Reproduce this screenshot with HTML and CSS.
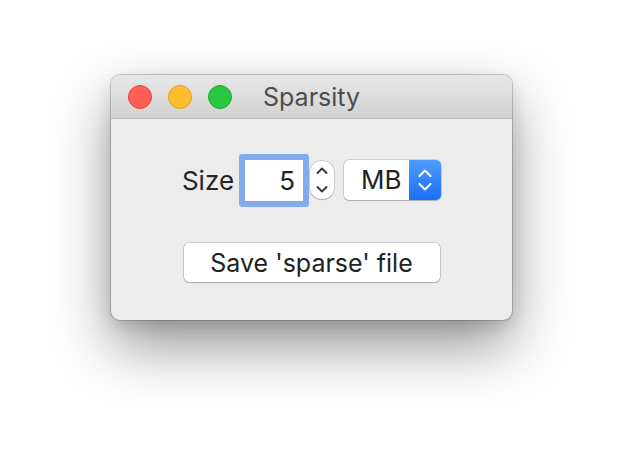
FILE: index.html
```html
<!DOCTYPE html>
<html>
<head>
<meta charset="utf-8">
<link rel="stylesheet" href="styles.css">
</head>
<body>
<div class="desk">
  <div class="window">
    <div class="titlebar">
      <div class="lights">
        <span class="light red"></span>
        <span class="light yellow"></span>
        <span class="light green"></span>
      </div>
      <div class="title">Sparsity</div>
    </div>
    <div class="content">
      <div class="row">
        <span class="label">Size</span>
        <div class="field">5</div>
        <div class="stepper">
          <svg width="24" height="38" viewBox="0 0 24 38">
            <path d="M7.5 12 L12 7.5 L16.5 12" fill="none" stroke="#333" stroke-width="1.8" stroke-linecap="round" stroke-linejoin="round"/>
            <path d="M7.5 26 L12 30.5 L16.5 26" fill="none" stroke="#333" stroke-width="1.8" stroke-linecap="round" stroke-linejoin="round"/>
          </svg>
        </div>
        <div class="popup">
          <span class="popup-text">MB</span>
          <span class="popup-arrows">
            <svg width="32" height="40" viewBox="0 0 32 40">
              <path d="M10.5 16 L16 10.5 L21.5 16" fill="none" stroke="#fff" stroke-width="2" stroke-linecap="round" stroke-linejoin="round"/>
              <path d="M10.5 24 L16 29.5 L21.5 24" fill="none" stroke="#fff" stroke-width="2" stroke-linecap="round" stroke-linejoin="round"/>
            </svg>
          </span>
        </div>
      </div>
      <button class="btn">Save 'sparse' file</button>
    </div>
  </div>
</div>
</body>
</html>
```
FILE: styles.css
```css
html, body {
  margin: 0;
  padding: 0;
  background: #ffffff;
}
body {
  width: 624px;
  height: 468px;
  overflow: hidden;
  font-family: Inter, "Liberation Sans", sans-serif;
}
.desk {
  padding: 75px 0 0 111px;
}
.window {
  width: 401px;
  height: 245px;
  box-sizing: border-box;
  border-radius: 9px;
  background: #ececec;
  overflow: hidden;
  box-shadow: 0 0 0 1px rgba(0,0,0,0.18), 0 26px 58px rgba(0,0,0,0.42), 0 6px 16px rgba(0,0,0,0.12);
  display: flex;
  flex-direction: column;
}
.titlebar {
  height: 43px;
  flex: 0 0 43px;
  background: linear-gradient(#e8e7e8, #d3d2d3);
  border-bottom: 1px solid #b9b9b9;
  display: flex;
  align-items: center;
}
.lights {
  display: flex;
  gap: 16px;
  padding-left: 17px;
}
.light {
  width: 22px;
  height: 22px;
  border-radius: 50%;
  display: block;
}
.red { background: #fe5f57; border: 1px solid #e0443e; }
.yellow { background: #febc2e; border: 1px solid #dea123; }
.green { background: #28c840; border: 1px solid #1aab29; }
.title {
  margin-left: 31px;
  font-size: 25px;
  color: #4d4d4d;
}
.content {
  flex: 1;
  display: flex;
  flex-direction: column;
  align-items: center;
  padding-top: 41px;
}
.row {
  display: flex;
  align-items: center;
  height: 40px;
}
.label {
  font-size: 26px;
  color: #262626;
  margin-right: 10px;
}
.field {
  width: 60px;
  height: 43px;
  box-sizing: border-box;
  background: #fff;
  border: 1px solid #86a9e6;
  border-radius: 1px;
  box-shadow: 0 0 0 5px #84aaee;
  font-size: 26px;
  color: #222;
  text-align: right;
  padding-right: 8px;
  line-height: 41px;
  margin-right: 6px;
}
.stepper {
  width: 24px;
  height: 38px;
  box-sizing: border-box;
  background: #fff;
  border-radius: 11px;
  box-shadow: 0 0 0 0.5px rgba(0,0,0,0.25), 0 1px 1px rgba(0,0,0,0.15);
  margin-right: 10px;
  display: flex;
  justify-content: center;
  align-items: center;
}
.stepper svg { display: block; }
.popup {
  width: 97px;
  height: 40px;
  box-sizing: border-box;
  background: #fff;
  border-radius: 5px;
  box-shadow: 0 0 0 0.5px rgba(0,0,0,0.25), 0 1px 1px rgba(0,0,0,0.15);
  display: flex;
  overflow: hidden;
}
.popup-text {
  flex: 1;
  font-size: 26px;
  color: #222;
  line-height: 40px;
  padding-left: 17px;
}
.popup-arrows {
  width: 32px;
  height: 40px;
  background: linear-gradient(#4f9cff, #1a6ff6);
}
.popup-arrows svg { display: block; }
.btn {
  margin-top: 43px;
  width: 256px;
  height: 39px;
  background: #fff;
  border: none;
  border-radius: 5px;
  box-shadow: 0 0 0 0.5px rgba(0,0,0,0.28), 0 1px 1px rgba(0,0,0,0.18);
  font-family: Inter, "Liberation Sans", sans-serif;
  font-size: 25px;
  color: #222;
  padding: 0;
}
```
